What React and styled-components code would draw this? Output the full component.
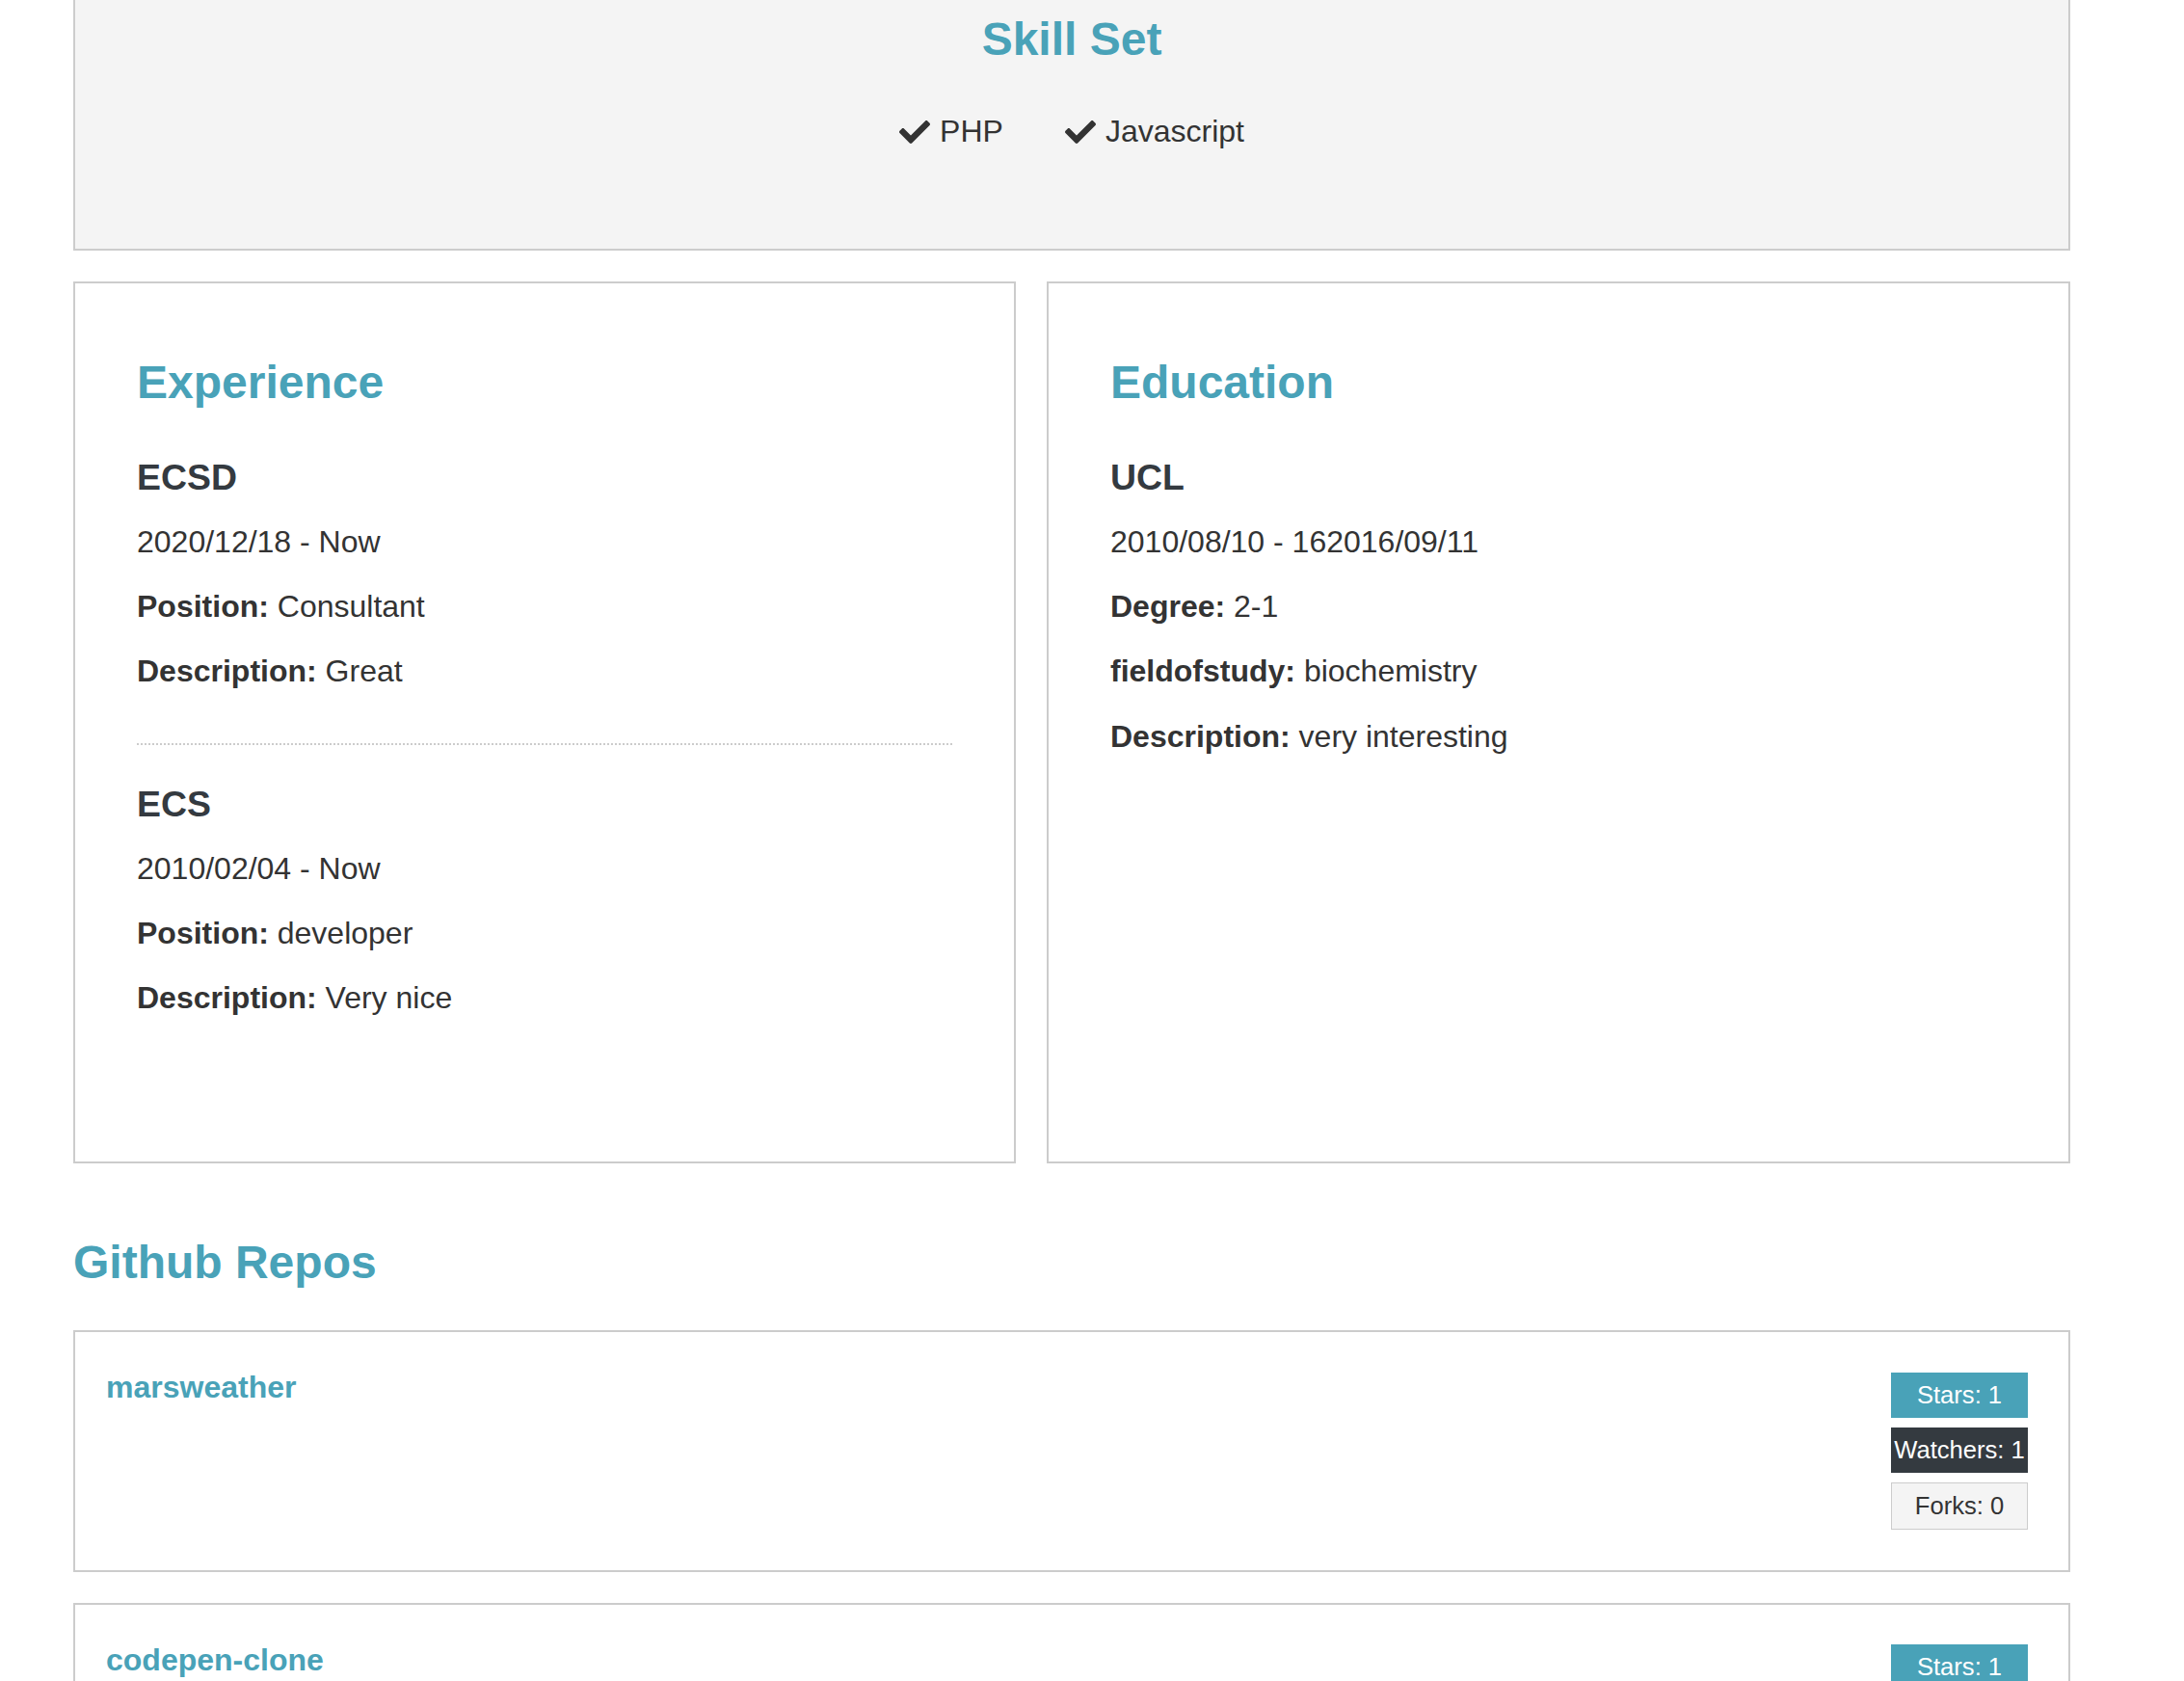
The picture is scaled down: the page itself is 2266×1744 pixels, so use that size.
import React from "react";
import styled, { createGlobalStyle } from "styled-components";
import { FaCheck } from "react-icons/fa";

const primary = "#49a2b8";
const dark = "#343a40";
const light = "#f4f4f4";

const GlobalStyle = createGlobalStyle`
  * {
    box-sizing: border-box;
    margin: 0;
    padding: 0;
  }
  body {
    font-family: "Liberation Sans", Arial, Helvetica, sans-serif;
    font-size: 32px;
    line-height: 1.6;
    color: #333;
    background: #fff;
  }
`;

const ProfileGrid = styled.div`
  display: grid;
  grid-template-columns: 978px 1fr;
  gap: 32px;
  width: 2072px;
  margin: -64px 0 0 76px;
`;

const SkillBox = styled.section`
  grid-column: 1 / -1;
  background: ${light};
  border: 2px solid #ccc;
  padding: 64px;
  text-align: center;
`;

const Heading = styled.h2`
  font-size: 48px;
  line-height: 77px;
  font-weight: bold;
  color: ${primary};
`;

const CardTitle = styled(Heading)`
  margin-bottom: 34px;
`;

const SectionTitle = styled(Heading)`
  margin: 32px 0;
`;

const SkillList = styled.div`
  display: flex;
  flex-wrap: wrap;
  justify-content: center;
  align-items: center;
`;

const SkillItem = styled.div`
  display: flex;
  align-items: center;
  gap: 10px;
  padding: 32px;
  line-height: 51px;
  svg {
    color: #333;
  }
`;

const Card = styled.section`
  border: 2px solid #ccc;
  padding: 64px;
  background: #fff;
`;

const Entry = styled.div`
  padding-bottom: 32px;
  margin-bottom: 35px;
  border-bottom: 2px dotted #ccc;

  &:last-child {
    border-bottom: 0;
    margin-bottom: 32px;
  }
`;

const EntryTitle = styled.h3`
  font-size: 37.4px;
  line-height: 52px;
  font-weight: bold;
  color: ${dark};
`;

const Line = styled.p`
  margin: 16px 0;
  line-height: 51.2px;

  strong {
    font-weight: bold;
  }
`;

const GithubSection = styled.section`
  grid-column: 1 / -1;
`;

const Repo = styled.div`
  display: flex;
  justify-content: space-between;
  align-items: flex-start;
  border: 2px solid #ccc;
  padding: 32px;
  margin-bottom: 32px;
  background: #fff;
`;

const RepoName = styled.h4`
  font-size: 32px;
  line-height: 51.2px;
  font-weight: bold;

  a {
    color: ${primary};
    text-decoration: none;
  }
`;

const BadgeList = styled.ul`
  list-style: none;
  width: 162px;
  flex-shrink: 0;
`;

const badgeColors = {
  primary: { bg: primary, fg: "#fff", border: "none" },
  dark: { bg: dark, fg: "#fff", border: "none" },
  light: { bg: light, fg: "#333", border: "1px solid #ccc" },
};

const Badge = styled.li`
  margin: 9.6px;
  padding: 3.2px;
  font-size: 25.6px;
  line-height: 1.6;
  text-align: center;
  white-space: nowrap;
  background: ${(p) => badgeColors[p.$variant].bg};
  color: ${(p) => badgeColors[p.$variant].fg};
  border: ${(p) => badgeColors[p.$variant].border};
`;

const skills = ["PHP", "Javascript"];

const experience = [
  { company: "ECSD", from: "2020/12/18", to: "Now", title: "Consultant", description: "Great" },
  { company: "ECS", from: "2010/02/04", to: "Now", title: "developer", description: "Very nice" },
];

const education = [
  {
    school: "UCL",
    from: "2010/08/10",
    to: "162016/09/11",
    degree: "2-1",
    fieldofstudy: "biochemistry",
    description: "very interesting",
  },
];

const repos = [
  { name: "marsweather", stars: 1, watchers: 1, forks: 0 },
  { name: "codepen-clone", stars: 1, watchers: 1, forks: 0 },
];

export default function App() {
  return (
    <>
      <GlobalStyle />
      <ProfileGrid>
        <SkillBox>
          <Heading>Skill Set</Heading>
          <SkillList>
            {skills.map((skill) => (
              <SkillItem key={skill}>
                <FaCheck size={32} />
                <span>{skill}</span>
              </SkillItem>
            ))}
          </SkillList>
        </SkillBox>

        <Card>
          <CardTitle>Experience</CardTitle>
          {experience.map((exp) => (
            <Entry key={exp.company}>
              <EntryTitle>{exp.company}</EntryTitle>
              <Line>
                {exp.from} - {exp.to}
              </Line>
              <Line>
                <strong>Position:</strong> {exp.title}
              </Line>
              <Line>
                <strong>Description:</strong> {exp.description}
              </Line>
            </Entry>
          ))}
        </Card>

        <Card>
          <CardTitle>Education</CardTitle>
          {education.map((edu) => (
            <Entry key={edu.school}>
              <EntryTitle>{edu.school}</EntryTitle>
              <Line>
                {edu.from} - {edu.to}
              </Line>
              <Line>
                <strong>Degree:</strong> {edu.degree}
              </Line>
              <Line>
                <strong>fieldofstudy:</strong> {edu.fieldofstudy}
              </Line>
              <Line>
                <strong>Description:</strong> {edu.description}
              </Line>
            </Entry>
          ))}
        </Card>

        <GithubSection>
          <SectionTitle>Github Repos</SectionTitle>
          {repos.map((repo) => (
            <Repo key={repo.name}>
              <div>
                <RepoName>
                  <a href="#">{repo.name}</a>
                </RepoName>
              </div>
              <BadgeList>
                <Badge $variant="primary">Stars: {repo.stars}</Badge>
                <Badge $variant="dark">Watchers: {repo.watchers}</Badge>
                <Badge $variant="light">Forks: {repo.forks}</Badge>
              </BadgeList>
            </Repo>
          ))}
        </GithubSection>
      </ProfileGrid>
    </>
  );
}
